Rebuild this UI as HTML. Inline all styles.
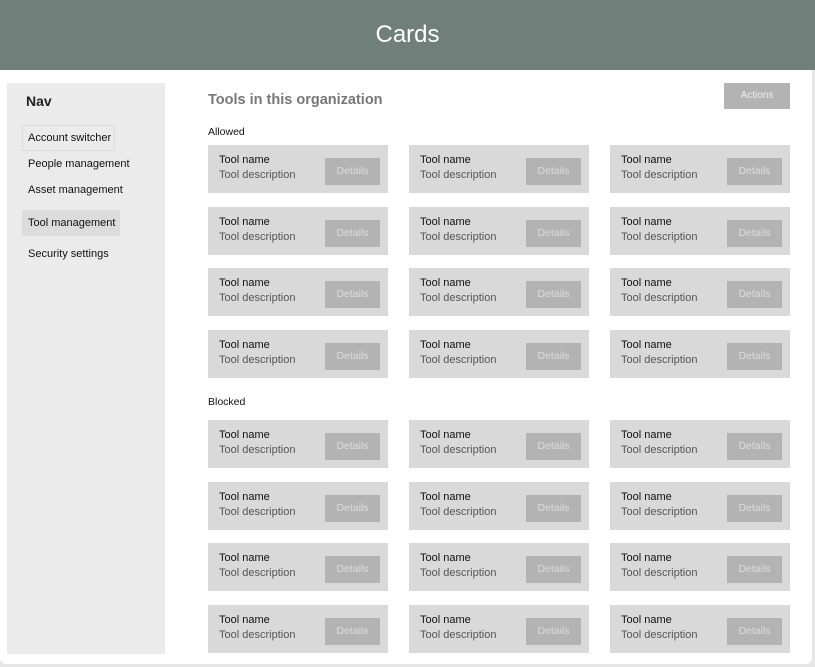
<!DOCTYPE html>
<html><head><style>
*{margin:0;padding:0;box-sizing:border-box}
body{width:815px;height:667px;background:#e6e6e6;font-family:"Liberation Sans",sans-serif;position:relative;overflow:hidden}
.hdr{position:absolute;left:0;top:0;width:815px;height:70px;background:#717f7a;color:#fff;font-size:24px;text-align:center;line-height:70px}
.panel{position:absolute;left:0;top:70px;width:812px;height:594px;background:#fff;border-radius:0 0 6px 6px}
.nav{position:absolute;left:7px;top:83px;width:158px;height:571px;background:#ebebeb}
.nt{position:absolute;left:26px;top:93px;font-size:14px;font-weight:bold;color:#222}
.ni{position:absolute;left:22px;font-size:11px;color:#111;padding:0 6px;height:26px;line-height:26px;white-space:nowrap}
.t{position:absolute;left:208px;top:92px;font-size:14.5px;font-weight:bold;color:#777}
.act{position:absolute;left:724px;top:83px;width:66px;height:26px;background:#b3b3b3;color:#eee;font-size:10px;text-align:center;line-height:26px}
.lbl{position:absolute;left:208px;font-size:10.5px;color:#111}
.c{position:absolute;width:180px;height:48px;background:#d9d9d9}
.c .n{position:absolute;left:11px;top:9px;font-size:11px;color:#111}
.c .d{position:absolute;left:11px;top:24px;font-size:11px;color:#555}
.c .b{position:absolute;left:117px;top:13px;width:55px;height:27px;background:#b3b3b3;color:#ddd;font-size:10.5px;text-align:center;line-height:27px}
</style></head><body>
<div class="hdr">Cards</div>
<div class="panel"></div>
<div class="nav"></div>
<div class="nt">Nav</div>
<div class="ni" style="top:125px;border:1px solid #ddd;width:93px;line-height:24px;padding:0 5px">Account switcher</div>
<div class="ni" style="top:151px">People management</div>
<div class="ni" style="top:177px">Asset management</div>
<div class="ni" style="top:210px;background:#dcdcdc;width:98px">Tool management</div>
<div class="ni" style="top:241px">Security settings</div>
<div class="t">Tools in this organization</div>
<div class="act">Actions</div>
<div class="lbl" style="top:126px">Allowed</div>
<div class="lbl" style="top:396px">Blocked</div>
<div id="g"></div>
<script>
var xs=[208,409,610],ys=[145,207,268,330,420,482,543,605],h='';
ys.forEach(function(y){xs.forEach(function(x){h+='<div class="c" style="left:'+x+'px;top:'+y+'px"><div class="n">Tool name</div><div class="d">Tool description</div><div class="b">Details</div></div>';});});
document.getElementById('g').innerHTML=h;
</script>
</body></html>
